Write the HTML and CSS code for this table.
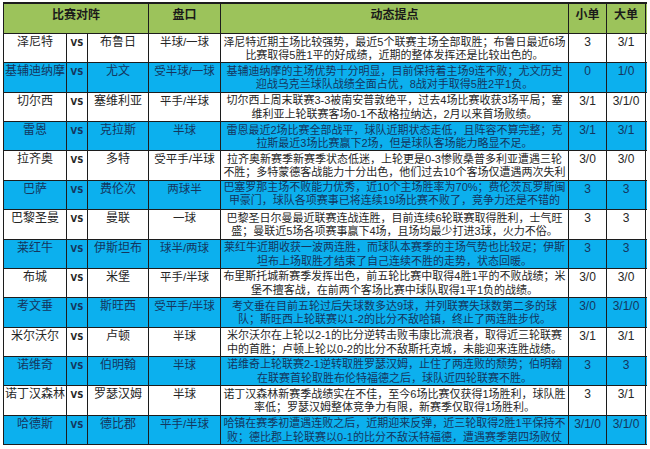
FILE: index.html
```html
<!DOCTYPE html>
<html lang="zh-CN">
<head>
<meta charset="utf-8">
<title>比赛对阵</title>
<link rel="stylesheet" href="styles.css">
</head>
<body>
<div class="sheet">
  <div class="row head">
    <div class="c span3">比赛对阵</div>
    <div class="c">盘口</div>
    <div class="c">动态提点</div>
    <div class="c">小单</div>
    <div class="c">大单</div>
  </div>
  <div class="row">
    <div class="c team">泽尼特</div><div class="c vs">VS</div><div class="c team">布鲁日</div><div class="c pan">半球/一球</div>
    <div class="c note">泽尼特近期主场比较强势，最近5个联赛主场全部取胜；布鲁日最近6场<br>比赛取得5胜1平的好成绩，近期的整体发挥还是比较出色的。</div>
    <div class="c num">3</div><div class="c num">3/1</div>
  </div>
  <div class="row alt">
    <div class="c team">基辅迪纳摩</div><div class="c vs">VS</div><div class="c team">尤文</div><div class="c pan">受半球/一球</div>
    <div class="c note">基辅迪纳摩的主场优势十分明显，目前保持着主场9连不败；尤文历史<br>迎战乌克兰球队战绩全面占优，8战对手取得5胜2平1负。</div>
    <div class="c num">0</div><div class="c num">1/0</div>
  </div>
  <div class="row">
    <div class="c team">切尔西</div><div class="c vs">VS</div><div class="c team">塞维利亚</div><div class="c pan">平手/半球</div>
    <div class="c note">切尔西上周末联赛3-3被南安普敦绝平，过去4场比赛收获3场平局；塞<br>维利亚上轮联赛客场0-1不敌格拉纳达，2月以来首场败绩。</div>
    <div class="c num">3/1</div><div class="c num">3/1/0</div>
  </div>
  <div class="row alt">
    <div class="c team">雷恩</div><div class="c vs">VS</div><div class="c team">克拉斯</div><div class="c pan">半球</div>
    <div class="c note">雷恩最近2场比赛全部战平，球队近期状态走低，且阵容不算完整；克<br>拉斯最近3场比赛赢下2场，但是球队客场能力略显不足。</div>
    <div class="c num">3/1</div><div class="c num">3/1</div>
  </div>
  <div class="row">
    <div class="c team">拉齐奥</div><div class="c vs">VS</div><div class="c team">多特</div><div class="c pan">受平手/半球</div>
    <div class="c note">拉齐奥新赛季新赛季状态低迷，上轮更是0-3惨败桑普多利亚遭遇三轮<br>不胜；多特蒙德客战能力十分出色，他们过去10个客场仅遭遇两次失利</div>
    <div class="c num">3/0</div><div class="c num">3/0</div>
  </div>
  <div class="row alt">
    <div class="c team">巴萨</div><div class="c vs">VS</div><div class="c team">费伦次</div><div class="c pan">两球半</div>
    <div class="c note raised">巴塞罗那主场不败能力优秀，近10个主场胜率为70%；费伦茨瓦罗斯闽<br>甲豪门，球队各项赛事已将连续19场比赛不败了，竞争力还是不错的</div>
    <div class="c num">3</div><div class="c num">3</div>
  </div>
  <div class="row">
    <div class="c team">巴黎圣曼</div><div class="c vs">VS</div><div class="c team">曼联</div><div class="c pan">一球</div>
    <div class="c note">巴黎圣日尔曼最近联赛连战连胜，目前连续6轮联赛取得胜利，士气旺<br>盛；曼联近5场各项赛事赢下4场，且场均最少打进3球，火力不俗。</div>
    <div class="c num">3</div><div class="c num">3</div>
  </div>
  <div class="row alt">
    <div class="c team">莱红牛</div><div class="c vs">VS</div><div class="c team">伊斯坦布</div><div class="c pan">球半/两球</div>
    <div class="c note">莱红牛近期收获一波两连胜，而球队本赛季的主场气势也比较足；伊斯<br>坦布上场取胜才结束了自己连续不胜的走势，状态回暖。</div>
    <div class="c num">3</div><div class="c num">3</div>
  </div>
  <div class="row">
    <div class="c team">布城</div><div class="c vs">VS</div><div class="c team">米堡</div><div class="c pan">平手/半球</div>
    <div class="c note">布里斯托城新赛季发挥出色，前五轮比赛中取得4胜1平的不败战绩；米<br>堡不擅客战，在前两个客场比赛中球队取得1平1负的战绩。</div>
    <div class="c num">3/0</div><div class="c num">3/0</div>
  </div>
  <div class="row alt">
    <div class="c team">考文垂</div><div class="c vs">VS</div><div class="c team">斯旺西</div><div class="c pan">受平手/半球</div>
    <div class="c note">考文垂在目前五轮过后失球数多达9球，并列联赛失球数第二多的球<br>队；斯旺西上轮联赛以1-2的比分不敌哈镇，终止了两连胜步伐。</div>
    <div class="c num">3/0</div><div class="c num">3/1/0</div>
  </div>
  <div class="row">
    <div class="c team">米尔沃尔</div><div class="c vs">VS</div><div class="c team">卢顿</div><div class="c pan">半球</div>
    <div class="c note">米尔沃尔在上轮以2-1的比分逆转击败韦康比流浪者，取得近三轮联赛<br>中的首胜；卢顿上轮以0-2的比分不敌斯托克城，未能迎来连胜战绩。</div>
    <div class="c num">3/1</div><div class="c num">3/1</div>
  </div>
  <div class="row alt">
    <div class="c team">诺维奇</div><div class="c vs">VS</div><div class="c team">伯明翰</div><div class="c pan">半球</div>
    <div class="c note">诺维奇上轮联赛2-1逆转取胜罗瑟汉姆，止住了两连败的颓势；伯明翰<br>在联赛首轮取胜布伦特福德之后，球队近四轮联赛不胜。</div>
    <div class="c num">3</div><div class="c num">3</div>
  </div>
  <div class="row">
    <div class="c team">诺丁汉森林</div><div class="c vs">VS</div><div class="c team">罗瑟汉姆</div><div class="c pan">半球</div>
    <div class="c note">诺丁汉森林新赛季战绩实在不佳，至今6场比赛仅获得1场胜利，球队胜<br>率低；罗瑟汉姆整体竞争力有限，新赛季仅取得1场胜利。</div>
    <div class="c num">3</div><div class="c num">3/1</div>
  </div>
  <div class="row alt">
    <div class="c team">哈德斯</div><div class="c vs">VS</div><div class="c team">德比郡</div><div class="c pan">平手/半球</div>
    <div class="c note">哈镇在赛季初遭遇连败之后，近期迎来反弹，近三轮取得2胜1平保持不<br>败；德比郡上轮联赛以0-1的比分不敌沃特福德，遭遇赛季第四场败仗</div>
    <div class="c num">3/1/0</div><div class="c num">3/1/0</div>
  </div>
</div>
</body>
</html>
```

FILE: styles.css
```css
html, body {
  margin: 0;
  padding: 0;
  background: #ffffff;
}

body {
  font-family: "Liberation Sans", "Noto Sans CJK SC", sans-serif;
  color: #262626;
}

.sheet {
  margin: 2px 0 0 3px;
  width: 643px;
  height: 441px;
  display: grid;
  grid-template-rows: 30px repeat(14, 1fr);
  border-top: 2px solid #1c1c1c;
  border-left: 1px solid #1c1c1c;
  box-sizing: content-box;
}

.row {
  display: grid;
  grid-template-columns: 63px 21px 61px 72px 348px 38px 39px;
  border-bottom: 1px solid #1c1c1c;
  min-height: 0;
  overflow: hidden;
  background: #ffffff;
}

.row.alt {
  background: #0cb0ee;
  color: #14365e;
}

.c {
  box-sizing: border-box;
  border-right: 1px solid #1c1c1c;
  text-align: center;
  overflow: hidden;
  white-space: nowrap;
  min-height: 0;
}

.head {
  background: #9cc35b;
  color: #1a1a1a;
}

.head .c {
  font-weight: bold;
  font-size: 12px;
  line-height: 16px;
  padding-top: 3px;
}

.head .span3 {
  grid-column: span 3;
}

.team {
  font-size: 12px;
  line-height: 14px;
  padding-top: 1px;
}

.vs {
  font-family: "DejaVu Sans Condensed", "Liberation Sans", sans-serif;
  font-weight: bold;
  font-size: 9.5px;
  line-height: 14px;
  padding-top: 2px;
}

.pan {
  font-size: 11.5px;
  line-height: 14px;
  padding-top: 1px;
}

.note {
  font-size: 11px;
  line-height: 13.5px;
  padding-top: 1.5px;
}

.note.raised {
  padding-top: 0;
}

.num {
  font-size: 12px;
  line-height: 14px;
  padding-top: 1px;
}
```
